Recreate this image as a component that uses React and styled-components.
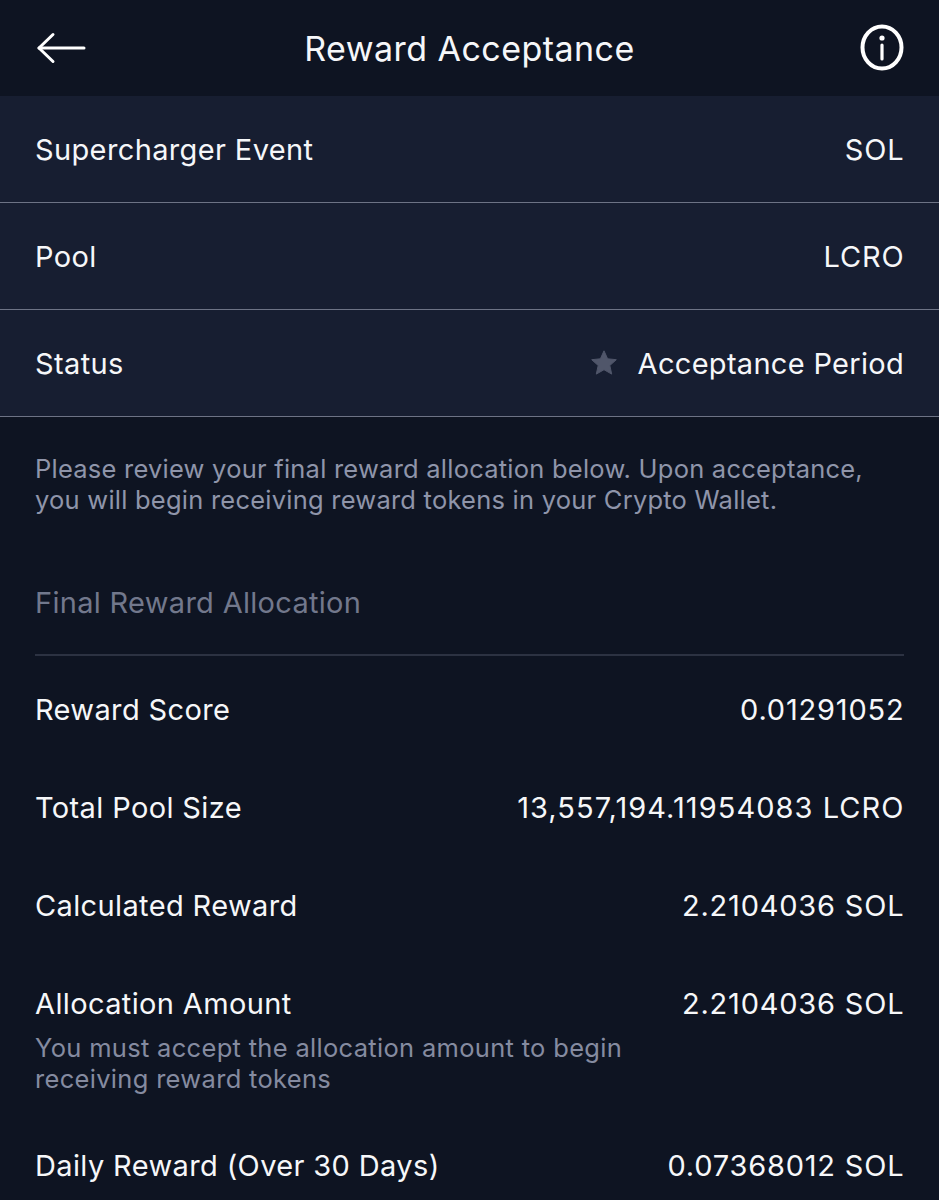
import React from "react";
import styled, { createGlobalStyle } from "styled-components";

const GlobalStyle = createGlobalStyle`
  html, body {
    margin: 0;
    padding: 0;
    background: #0e1422;
  }
  * {
    box-sizing: border-box;
  }
`;

const Page = styled.div`
  width: 939px;
  height: 1200px;
  overflow: hidden;
  background: #0e1422;
  color: #f6f7f9;
  font-family: Inter, "Liberation Sans", sans-serif;
  font-size: 29px;
  letter-spacing: 0.37px;
`;

const Header = styled.header`
  height: 96px;
  padding: 0 34px 0 36px;
  display: flex;
  align-items: center;
  justify-content: space-between;
`;

const IconSlot = styled.div`
  width: ${({ $width }) => $width}px;
  display: flex;
  justify-content: ${({ $end }) => ($end ? "flex-end" : "flex-start")};
`;

const Title = styled.h1`
  margin: 0;
  font-size: 34px;
  font-weight: 400;
  letter-spacing: 0.45px;
`;

const InfoRows = styled.section`
  background: #171e31;
`;

const InfoRow = styled.div`
  height: 107px;
  padding: 0 35px;
  display: flex;
  align-items: center;
  justify-content: space-between;
  border-bottom: 1px solid #6d7385;
`;

const Value = styled.span`
  letter-spacing: ${({ $spacing }) => $spacing || 0.8}px;
  margin-right: ${({ $spacing }) => -($spacing || 0.8) / 2}px;
`;

const Status = styled.div`
  display: flex;
  align-items: center;
  gap: 21px;
  letter-spacing: 0.3px;
`;

const Note = styled.p`
  margin: 0;
  padding: 37px 35px 0;
  font-size: 25.5px;
  line-height: 30.5px;
  letter-spacing: 0.23px;
  color: #8f95aa;
`;

const SectionTitle = styled.h2`
  margin: 70px 35px 0;
  padding-bottom: 34px;
  font-size: 29px;
  line-height: 35px;
  font-weight: 400;
  letter-spacing: 0.3px;
  color: #72788c;
  border-bottom: 2px solid #2c3242;
`;

const Rewards = styled.section`
  padding: 0 35px;
`;

const RewardRow = styled.div`
  height: ${({ $height }) => $height}px;
  display: flex;
  align-items: flex-start;
  justify-content: space-between;
  padding-top: 36px;
  line-height: 35px;
`;

const SubNote = styled.div`
  margin-top: 12px;
  font-size: 25.5px;
  line-height: 30.5px;
  letter-spacing: 0.31px;
  color: #858ba0;
`;

const BackIcon = () => (
  <svg width="50" height="34" viewBox="0 0 50 34" fill="none" stroke="#fff" strokeWidth="3" strokeLinecap="round" strokeLinejoin="round">
    <path d="M48 17H3" />
    <path d="M17 3.5 3 17l14 13.5" />
  </svg>
);

const InfoIcon = () => (
  <svg width="46" height="48" viewBox="0 0 46 48" fill="none" stroke="#fff">
    <ellipse cx="23" cy="23.5" rx="19.5" ry="21" strokeWidth="4" />
    <path d="M23 21v14" strokeWidth="3.2" strokeLinecap="round" />
    <circle cx="23" cy="14" r="2.6" fill="#fff" stroke="none" />
  </svg>
);

const StarIcon = () => (
  <svg width="26" height="26" viewBox="0 0 26 26">
    <path
      d="M13 .8l3.6 8 8.7.9-6.5 5.8 1.9 8.6L13 19.7l-7.7 4.4 1.9-8.6L.7 9.7l8.7-.9z"
      fill="#50566a"
      stroke="#50566a"
      strokeLinejoin="round"
    />
  </svg>
);

const rewards = [
  { label: "Reward Score", value: "0.01291052", height: 98 },
  { label: "Total Pool Size", value: "13,557,194.11954083 LCRO", height: 98, spacing: 1.05 },
  { label: "Calculated Reward", value: "2.2104036 SOL", height: 98 },
  {
    label: "Allocation Amount",
    value: "2.2104036 SOL",
    height: 162,
    note: ["You must accept the allocation amount to begin", "receiving reward tokens"],
  },
  { label: "Daily Reward (Over 30 Days)", value: "0.07368012 SOL", height: 98 },
];

const App = () => {
  return (
    <Page>
      <GlobalStyle />
      <Header>
        <IconSlot $width={50}>
          <BackIcon />
        </IconSlot>
        <Title>Reward Acceptance</Title>
        <IconSlot $width={52} $end>
          <InfoIcon />
        </IconSlot>
      </Header>

      <InfoRows>
        <InfoRow>
          <span>Supercharger Event</span>
          <Value>SOL</Value>
        </InfoRow>
        <InfoRow>
          <span>Pool</span>
          <Value>LCRO</Value>
        </InfoRow>
        <InfoRow>
          <span>Status</span>
          <Status>
            <StarIcon />
            <span>Acceptance Period</span>
          </Status>
        </InfoRow>
      </InfoRows>

      <Note>
        Please review your final reward allocation below. Upon acceptance,
        <br />
        you will begin receiving reward tokens in your Crypto Wallet.
      </Note>

      <SectionTitle>Final Reward Allocation</SectionTitle>

      <Rewards>
        {rewards.map((row) => (
          <RewardRow key={row.label} $height={row.height}>
            <div>
              {row.label}
              {row.note && (
                <SubNote>
                  {row.note[0]}
                  <br />
                  {row.note[1]}
                </SubNote>
              )}
            </div>
            <Value $spacing={row.spacing}>{row.value}</Value>
          </RewardRow>
        ))}
      </Rewards>
    </Page>
  );
};

export default App;
